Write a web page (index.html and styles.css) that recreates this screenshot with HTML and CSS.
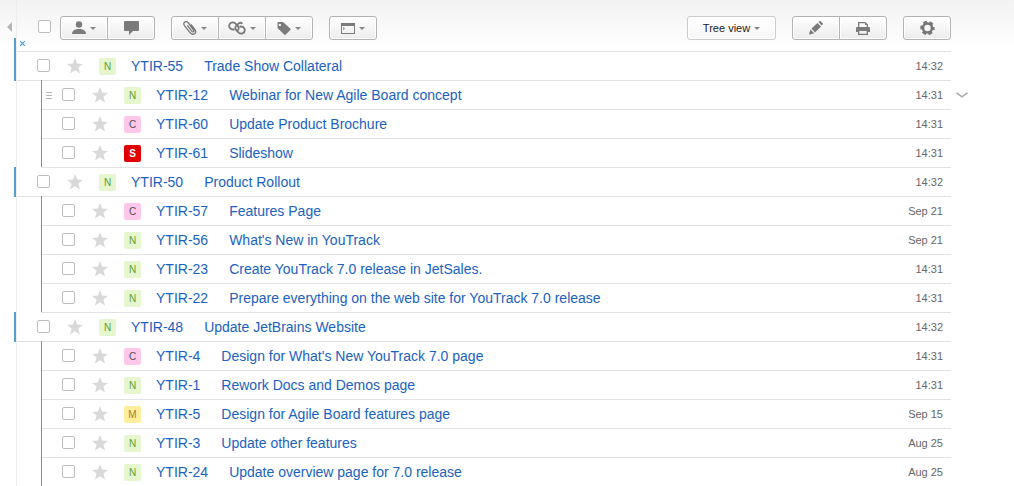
FILE: index.html
```
<!DOCTYPE html>
<html lang="en">
<head>
<meta charset="utf-8">
<title>Issues</title>
<link rel="stylesheet" href="styles.css">
</head>
<body>
<svg class="defs" aria-hidden="true">
  <symbol id="star" viewBox="0 0 16 16"><path d="M8 0l2.100 5.600L16 5.900l-4.600 3.700L13 15.500 8 12.200 3 15.500l1.600-5.900L0 5.900l5.900-.3z"/></symbol>
</svg>
<div class="page">
  <aside class="side"><button class="collapse" type="button" aria-label="Collapse"></button></aside>
  <main class="issues">
    <header class="toolbar">
      <button class="close" type="button" aria-label="Close"><svg width="5" height="5" viewBox="0 0 5 5"><path d="M0 0l5 5M5 0L0 5"/></svg></button>
      <input class="check" type="checkbox" aria-label="Select all">
      <div class="group">
        <button class="btn" type="button" aria-label="Assign"><svg class="icon" width="14" height="14" viewBox="0 0 14 14"><circle cx="7" cy="3.500" r="3.200"/><path d="M0 13c0-3.500 3-5 7-5s7 1.500 7 5z"/></svg><i class="caret"></i></button>
        <button class="btn" type="button" aria-label="Comment"><svg class="icon" width="15" height="14" viewBox="0 0 15 14"><path d="M1 0h13q1 0 1 1v8q0 1-1 1H9l-4 4v-4H1q-1 0-1-1V1q0-1 1-1z"/></svg></button>
      </div>
      <div class="group">
        <button class="btn" type="button" aria-label="Attach"><svg class="icon line" width="14" height="14" viewBox="0 0 14 14"><path d="M4.300 4.300l4.700 6c1 1.200 2.600.1 1.600-1.300L5.400 2C3-.8-.8 1.500 1.500 4.600l5.700 7.200c2.800 3.100 7.300.4 4.800-3.100L8 3.500"/></svg><i class="caret"></i></button>
        <button class="btn" type="button" aria-label="Link"><svg class="icon link" width="18" height="14" viewBox="0 0 18 14"><path d="M6.500 8.300C3.800 9.200 1 7 1.200 4.600 1.400 1.700 5 .3 7.300 2.400l2.600 2.700c1.300 1.500.9 3.400-.4 4.500"/><path d="M11.500 5.700c2.700-.9 5.500 1.300 5.300 3.700-.2 2.900-3.800 4.300-6.100 2.200L8.100 8.900C6.800 7.400 7.200 5.500 8.500 4.400l2-1.800c1.200-1 2.800-1 3.900 0"/></svg><i class="caret"></i></button>
        <button class="btn" type="button" aria-label="Tag"><svg class="icon" width="14" height="13" viewBox="0 0 14 13"><path fill-rule="evenodd" d="M1 0h5l7.500 6.700q.5.500 0 1L8.500 12.700q-.5.500-1 0L.5 6V.5zm1.800 1.700a1.200 1.200 0 1 0 .1 0z"/></svg><i class="caret"></i></button>
      </div>
      <div class="group">
        <button class="btn" type="button" aria-label="Command"><svg class="icon" width="14" height="11" viewBox="0 0 14 11"><path fill-rule="evenodd" d="M0 0h14v11H0zM1 3v7h12V3z"/><path d="M2 4l2 1.500L2 7V6l.7-.5L2 5z"/></svg><i class="caret"></i></button>
      </div>
      <div class="group right">
        <button class="btn view" type="button">Tree view<i class="caret"></i></button>
      </div>
      <div class="group">
        <button class="btn" type="button" aria-label="Edit"><svg class="icon" width="14" height="14" viewBox="0 0 14 14"><path d="M2.500 7.500l6-5.500 3.500 3.500-6 6zM9.500 1l1-1q.7-.3 1.200.2l2 2q.5.600 0 1.200l-1 1zM1.500 8.500l3.700 3.700-4.700 1.300q-.5 0-.5-.5z"/></svg></button>
        <button class="btn" type="button" aria-label="Print"><svg class="icon" width="14" height="13" viewBox="0 0 14 13"><path fill-rule="evenodd" d="M2 0h7.500L12 2.500V5h1q1 0 1 1v4h-2v3H2v-3H0V6q0-1 1-1h1zm1.300 1.200V5h7.400V3H9V1.200zM3.300 9v2.800h7.400V9z"/></svg></button>
      </div>
      <div class="group">
        <button class="btn" type="button" aria-label="Settings"><svg class="icon gear" width="15" height="14" viewBox="0 0 15 14"><circle cx="7.500" cy="7" r="4.500" stroke-width="2.600"/><circle cx="7.500" cy="7" r="6" stroke-width="2.400" stroke-dasharray="3.770 2.513" stroke-dashoffset="1.885"/></svg></button>
      </div>
    </header>
    <ul class="list" id="list"></ul>
  </main>
</div>
<script src="issues.js"></script>
</body>
</html>
```

FILE: issues.js
```
const issues = [
  [0, "N", "YTIR-55", "Trade Show Collateral", "14:32"],
  [1, "N", "YTIR-12", "Webinar for New Agile Board concept", "14:31"],
  [1, "C", "YTIR-60", "Update Product Brochure", "14:31"],
  [1, "S", "YTIR-61", "Slideshow", "14:31"],
  [0, "N", "YTIR-50", "Product Rollout", "14:32"],
  [1, "C", "YTIR-57", "Features Page", "Sep 21"],
  [1, "N", "YTIR-56", "What's New in YouTrack", "Sep 21"],
  [1, "N", "YTIR-23", "Create YouTrack 7.0 release in JetSales.", "14:31"],
  [1, "N", "YTIR-22", "Prepare everything on the web site for YouTrack 7.0 release", "14:31"],
  [0, "N", "YTIR-48", "Update JetBrains Website", "14:32"],
  [1, "C", "YTIR-4", "Design for What's New YouTrack 7.0 page", "14:31"],
  [1, "N", "YTIR-1", "Rework Docs and Demos page", "14:31"],
  [1, "M", "YTIR-5", "Design for Agile Board features page", "Sep 15"],
  [1, "N", "YTIR-3", "Update other features", "Aug 25"],
  [1, "N", "YTIR-24", "Update overview page for 7.0 release", "Aug 25"]
];

document.getElementById("list").innerHTML = issues.map(([level, type, id, title, date], i) => `
  <li class="row ${level ? "child" : "root"}">
    ${i === 1 ? '<span class="grip"></span>' : ""}
    <input class="check" type="checkbox" aria-label="Select ${id}">
    <button class="star" type="button" aria-label="Star ${id}"><svg width="16" height="16"><use href="#star"/></svg></button>
    <span class="badge type-${type.toLowerCase()}">${type}</span>
    <a class="id" href="#${id}">${id}</a>
    <a class="title" href="#${id}">${title}</a>
    <time class="date">${date}</time>
    ${i === 1 ? '<button class="more" type="button" aria-label="Show details"><svg width="12" height="6" viewBox="0 0 12 6"><path d="M.5.800L6 4.800 11.500.8"/></svg></button>' : ""}
  </li>`).join("");
```

FILE: styles.css
```
* {
  box-sizing: border-box;
}

body {
  margin: 0;
  height: 100vh;
  overflow: hidden;
  background: #fff linear-gradient(#f2f2f2, #fff 48px) no-repeat;
  font-family: "Liberation Sans", Arial, sans-serif;
  font-size: 14px;
}

button {
  margin: 0;
  padding: 0;
  border: 0;
  background: none;
  font: inherit;
}

a {
  color: #1a62c0;
  text-decoration: none;
}

.defs {
  position: absolute;
  width: 0;
  height: 0;
}

.page {
  display: grid;
  grid-template-columns: 16px 1fr;
  padding-right: 63px;
}

.side {
  padding: 22px 0 0 7px;
}

.collapse {
  display: block;
  border: solid transparent;
  border-width: 5px 5px 5px 0;
  border-right-color: #b5b5b5;
}

.issues {
  min-width: 0;
  border-left: 1px solid #ededed;
}

.toolbar {
  position: relative;
  display: flex;
  align-items: flex-start;
  gap: 16px;
  padding: 16px 0 11px 21px;
  border-bottom: 1px solid #e2e2e2;
}

.close {
  position: absolute;
  left: 3px;
  bottom: 5px;
}

.close svg {
  display: block;
  fill: none;
  stroke: #4a9bcb;
  stroke-width: 1.200px;
}

.check {
  appearance: none;
  flex: none;
  width: 13px;
  height: 13px;
  margin: 0;
  border: 1px solid #bdbdbd;
  border-radius: 2px;
  background: #fff;
}

.toolbar .check {
  margin: 4px -7px 0 0;
}

.group {
  display: flex;
}

.right {
  margin-left: auto;
}

.btn {
  display: flex;
  align-items: center;
  justify-content: center;
  gap: 4px;
  width: 48px;
  height: 24px;
  border: 1px solid #b3b3b3;
  background: linear-gradient(#fff, #ececec);
  box-shadow: inset 0 0 0 1px #fff;
}

.btn + .btn {
  margin-left: -1px;
}

.btn:first-child {
  border-top-left-radius: 3px;
  border-bottom-left-radius: 3px;
}

.btn:last-child {
  border-top-right-radius: 3px;
  border-bottom-right-radius: 3px;
}

.view {
  width: 89px;
  border-color: #ccc;
  background: linear-gradient(#fff, #f7f7f7);
  color: #222;
  font-size: 11px;
}

.caret {
  border: solid transparent;
  border-width: 3px 3px 0;
  border-top-color: #888;
}

.icon {
  fill: #7b7b7b;
}

.line,
.link,
.gear {
  fill: none;
  stroke: #777;
}

.line {
  stroke-width: 1.3px;
}

.link {
  stroke-width: 1.800px;
}

.list {
  margin: 0;
  padding: 0;
  list-style: none;
}

.row {
  position: relative;
  display: flex;
  align-items: center;
  height: 29px;
  padding: 0 8px 0 20px;
  border-bottom: 1px solid #e2e2e2;
}

.root::before {
  content: "";
  position: absolute;
  top: -1px;
  bottom: -1px;
  left: -3px;
  width: 2px;
  background: #559fca;
}

.root:first-child::before {
  top: -14px;
}

.child {
  margin-left: 24px;
}

.child::before {
  content: "";
  position: absolute;
  top: -1px;
  bottom: 0;
  left: 0;
  width: 1px;
  background: #559fca;
}

.grip {
  position: absolute;
  left: 5px;
  width: 6px;
  height: 7px;
  border: solid #b5b5b5;
  border-width: 1px 0;
  background: linear-gradient(#b5b5b5, #b5b5b5) 0 2px / 6px 1px no-repeat;
}

.row .check {
  margin-bottom: 2px;
}

.child .check {
  margin-left: 1px;
}

.star {
  margin: 0 16px 0 17px;
}

.star svg {
  display: block;
  fill: #d9d9d9;
}

.badge {
  width: 17px;
  height: 17px;
  margin: 1px 15px 0 0;
  border-radius: 2px;
  font-size: 10px;
  line-height: 17px;
  text-align: center;
}

.type-n {
  background: #e6f6cf;
  color: #5d9e2c;
}

.type-c {
  background: #ffc7ea;
  color: #4d4d4d;
}

.type-s {
  background: #e30000;
  color: #fff;
  font-weight: bold;
}

.type-m {
  background: #ffee9c;
  color: #b07830;
}

.title {
  margin-left: 21px;
}

.date {
  margin-left: auto;
  color: #666;
  font-size: 11px;
}

.more {
  position: absolute;
  right: -17px;
}

.more svg {
  display: block;
  fill: none;
  stroke: #aaa;
  stroke-width: 1.500px;
}
```
